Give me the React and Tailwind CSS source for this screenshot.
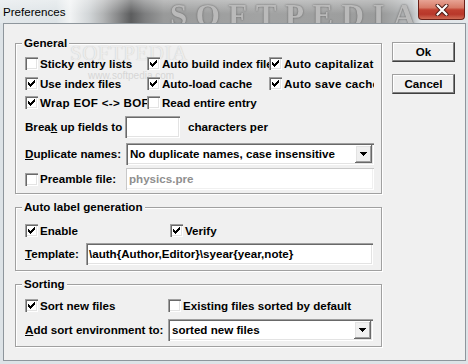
import React from "react";

const CHECK_PX = [
  [6, 0], [5, 1], [6, 1], [0, 2], [4, 2], [5, 2], [6, 2],
  [0, 3], [1, 3], [3, 3], [4, 3], [5, 3],
  [0, 4], [1, 4], [2, 4], [3, 4], [4, 4],
  [1, 5], [2, 5], [3, 5], [2, 6],
];

const SUNKEN =
  "shadow-[inset_1px_1px_0_#a0a0a0,inset_2px_2px_0_#696969,inset_-1px_-1px_0_#ffffff,inset_-2px_-2px_0_#e3e3e3]";

function Box({ checked }) {
  return (
    <span className={`w-[13px] h-[13px] shrink-0 bg-white flex items-center justify-center ${SUNKEN}`}>
      {checked && (
        <svg width="7" height="7" viewBox="0 0 7 7" shapeRendering="crispEdges">
          {CHECK_PX.map(([x, y]) => (
            <rect key={`${x}-${y}`} x={x} y={y} width="1" height="1" fill="#000" />
          ))}
        </svg>
      )}
    </span>
  );
}

function CB({ checked, children, w, track = "" }) {
  return (
    <div className={`flex items-center h-[19px] overflow-hidden whitespace-nowrap shrink-0 ${w}`}>
      <Box checked={checked} />
      <span className={`ml-[2px] ${track}`}>{children}</span>
    </div>
  );
}

function Input({ children, w, disabled }) {
  return (
    <div
      className={`h-[22px] bg-white flex items-center shrink-0 overflow-hidden whitespace-nowrap ${w} ${
        disabled
          ? "shadow-[inset_1px_1px_0_#c8c8c8,inset_-1px_-1px_0_#ffffff,inset_-2px_-2px_0_#f0f0f0] text-[#8f8f8f]"
          : SUNKEN
      }`}
    >
      <span className="pl-[3px]">{children}</span>
    </div>
  );
}

function Select({ children, w }) {
  return (
    <div className={`h-[22px] bg-white flex items-center shrink-0 ${w} ${SUNKEN}`}>
      <span className="pl-[4px] flex-1 overflow-hidden whitespace-nowrap">{children}</span>
      <div className="w-[17px] h-[18px] mr-[2px] bg-[#f0f0f0] flex items-center justify-center shadow-[inset_-1px_-1px_0_#696969,inset_1px_1px_0_#ffffff,inset_-2px_-2px_0_#a0a0a0,inset_2px_2px_0_#e3e3e3]">
        <svg width="7" height="4" viewBox="0 0 7 4" shapeRendering="crispEdges">
          <path d="M0 0h7v1h-7zM1 1h5v1h-5zM2 2h3v1h-3zM3 3h1v1h-1z" fill="#000" />
        </svg>
      </div>
    </div>
  );
}

function Group({ label, h, className, children }) {
  return (
    <div
      className={`relative shrink-0 border border-[#a0a0a0] shadow-[inset_1px_1px_0_#ffffff,1px_1px_0_#ffffff] pl-[9px] ${h} ${className}`}
    >
      <span className="absolute left-[6px] -top-[8px] px-[2px] leading-[14px] bg-[#f0f0f0]">{label}</span>
      {children}
    </div>
  );
}

function Button({ children, mt = "" }) {
  return (
    <div
      className={`w-[63px] h-[20px] bg-[#f0f0f0] flex items-center justify-center border border-t-[#a0a0a0] border-l-[#a0a0a0] border-r-[#404040] border-b-[#404040] shadow-[inset_-1px_-1px_0_#808080,inset_1px_1px_0_#ffffff] ${mt}`}
    >
      {children}
    </div>
  );
}

export default function App() {
  return (
    <div className="w-[468px] h-[364px] overflow-hidden bg-[#dde3e7] flex flex-col font-['Liberation_Sans',Arial,sans-serif] text-[11.6px] font-bold text-black leading-[14px]">
      {/* Title bar */}
      <div className="relative h-[23px] shrink-0 overflow-hidden bg-[linear-gradient(90deg,#e3e8eb_0%,#dee4e7_12%,#f1f3f4_15%,#d2d6d8_19%,#b3b5b6_22%,#8a8b8c_25%,#5c5d5e_28%,#7d7e7f_31%,#999a9a_35%,#a2a3a3_55%,#9b9c9c_82%,#b8bbbd_88%,#dfe4e7_90%,#e3e8eb_100%)]">
        <div className="absolute inset-0 bg-[linear-gradient(180deg,rgba(255,255,255,0.35)_0%,rgba(255,255,255,0)_60%)]" />
        <span className="absolute left-[170px] top-[1px] font-['Liberation_Serif',serif] text-[31px] leading-[30px] font-bold tracking-[8.5px] text-[#bababa] blur-[0.7px] [text-shadow:0_0_2px_#5a5a5a]">
          SOFTPEDIA
        </span>
        <span className="absolute left-[3px] top-[5px] font-normal text-[11.6px] leading-[14px] text-black">Preferences</span>
        <div className="absolute left-[418px] top-0 w-[47px] h-[20px] rounded-b-[4px] border border-t-0 border-[#6a2018] bg-[linear-gradient(180deg,#e7a394_0%,#d77b68_40%,#c04030_52%,#b8372a_75%,#cf6b55_100%)] flex items-center justify-center">
          <svg width="14" height="12" viewBox="0 0 14 12">
            <path d="M2.5 1.5L11.5 10.5M11.5 1.5L2.5 10.5" stroke="#4a1a14" strokeWidth="4" strokeLinecap="round" />
            <path d="M2.5 1.5L11.5 10.5M11.5 1.5L2.5 10.5" stroke="#ffffff" strokeWidth="2.2" strokeLinecap="round" />
          </svg>
        </div>
      </div>

      {/* Client area */}
      <div className="relative ml-[3px] w-[463px] h-[338px] shrink-0 border border-[#8e969c] bg-[#f0f0f0] flex">
        {/* watermark */}
        <span className="pointer-events-none absolute left-[66px] top-[18px] font-['Liberation_Serif',serif] font-normal text-[21px] leading-[22px] tracking-[0.5px] text-[#ececec] [text-shadow:0_0_1px_#c4c4c4]">
          SOFTPEDIA
        </span>
        <span className="pointer-events-none absolute left-[84px] top-[47px] font-normal text-[10px] leading-[10px] text-[#d6d6d6]">
          www.softpedia.com
        </span>

        <div className="relative ml-[11px] mt-[19px] w-[367px] flex flex-col">
          <Group label="General" h="h-[151px]" className="pt-[10px]">
            <div className="flex">
              <CB checked={false} w="w-[122px]">Sticky entry lists</CB>
              <CB checked w="w-[122px]">Auto build index file</CB>
              <CB checked w="w-[105px]" track="tracking-[0.25px]">Auto capitalization</CB>
            </div>
            <div className="flex mt-[1px]">
              <CB checked w="w-[122px]">Use index files</CB>
              <CB checked w="w-[122px]">Auto-load cache</CB>
              <CB checked w="w-[105px]" track="tracking-[0.25px]">Auto save cache</CB>
            </div>
            <div className="flex">
              <CB checked w="w-[122px]" track="tracking-[0.3px]">Wrap EOF &lt;-&gt; BOF</CB>
              <CB checked={false} w="w-[122px]">Read entire entry</CB>
            </div>
            <div className="flex items-center mt-[4px]">
              <span className="w-[100px] shrink-0 whitespace-nowrap">
                Brea<span className="underline">k</span> up fields to
              </span>
              <Input w="w-[55px]" />
              <span className="ml-[8px] whitespace-nowrap">characters per</span>
            </div>
            <div className="flex items-center mt-[5px]">
              <span className="w-[101px] shrink-0 whitespace-nowrap">
                <span className="underline">D</span>uplicate names:
              </span>
              <Select w="w-[248px]">No duplicate names, case insensitive</Select>
            </div>
            <div className="flex items-center mt-[3px]">
              <div className="w-[101px] shrink-0 flex items-center">
                <Box checked={false} />
                <span className="ml-[2px] whitespace-nowrap">Preamble file:</span>
              </div>
              <Input w="w-[248px]" disabled>
                physics.pre
              </Input>
            </div>
          </Group>

          <Group label="Auto label generation" h="h-[64px]" className="mt-[13px] pt-[13px]">
            <div className="flex">
              <CB checked w="w-[145px]">Enable</CB>
              <CB checked w="w-[100px]">Verify</CB>
            </div>
            <div className="flex items-center mt-[3px]">
              <span className="w-[61px] shrink-0 whitespace-nowrap">
                <span className="underline">T</span>emplate:
              </span>
              <Input w="w-[287px]">\auth{"{"}Author,Editor{"}"}\syear{"{"}year,note{"}"}</Input>
            </div>
          </Group>

          <Group label="Sorting" h="h-[63px]" className="mt-[13px] pt-[11px]">
            <div className="flex">
              <CB checked w="w-[143px]">Sort new files</CB>
              <CB checked={false} w="w-[200px]">Existing files sorted by default</CB>
            </div>
            <div className="flex items-center mt-[4px]">
              <span className="w-[143px] shrink-0 whitespace-nowrap">
                <span className="underline">A</span>dd sort environment to:
              </span>
              <Select w="w-[205px]">sorted new files</Select>
            </div>
          </Group>
        </div>

        <div className="ml-[10px] mt-[18px] flex flex-col">
          <Button>Ok</Button>
          <Button mt="mt-[12px]">Cancel</Button>
        </div>
      </div>
    </div>
  );
}
